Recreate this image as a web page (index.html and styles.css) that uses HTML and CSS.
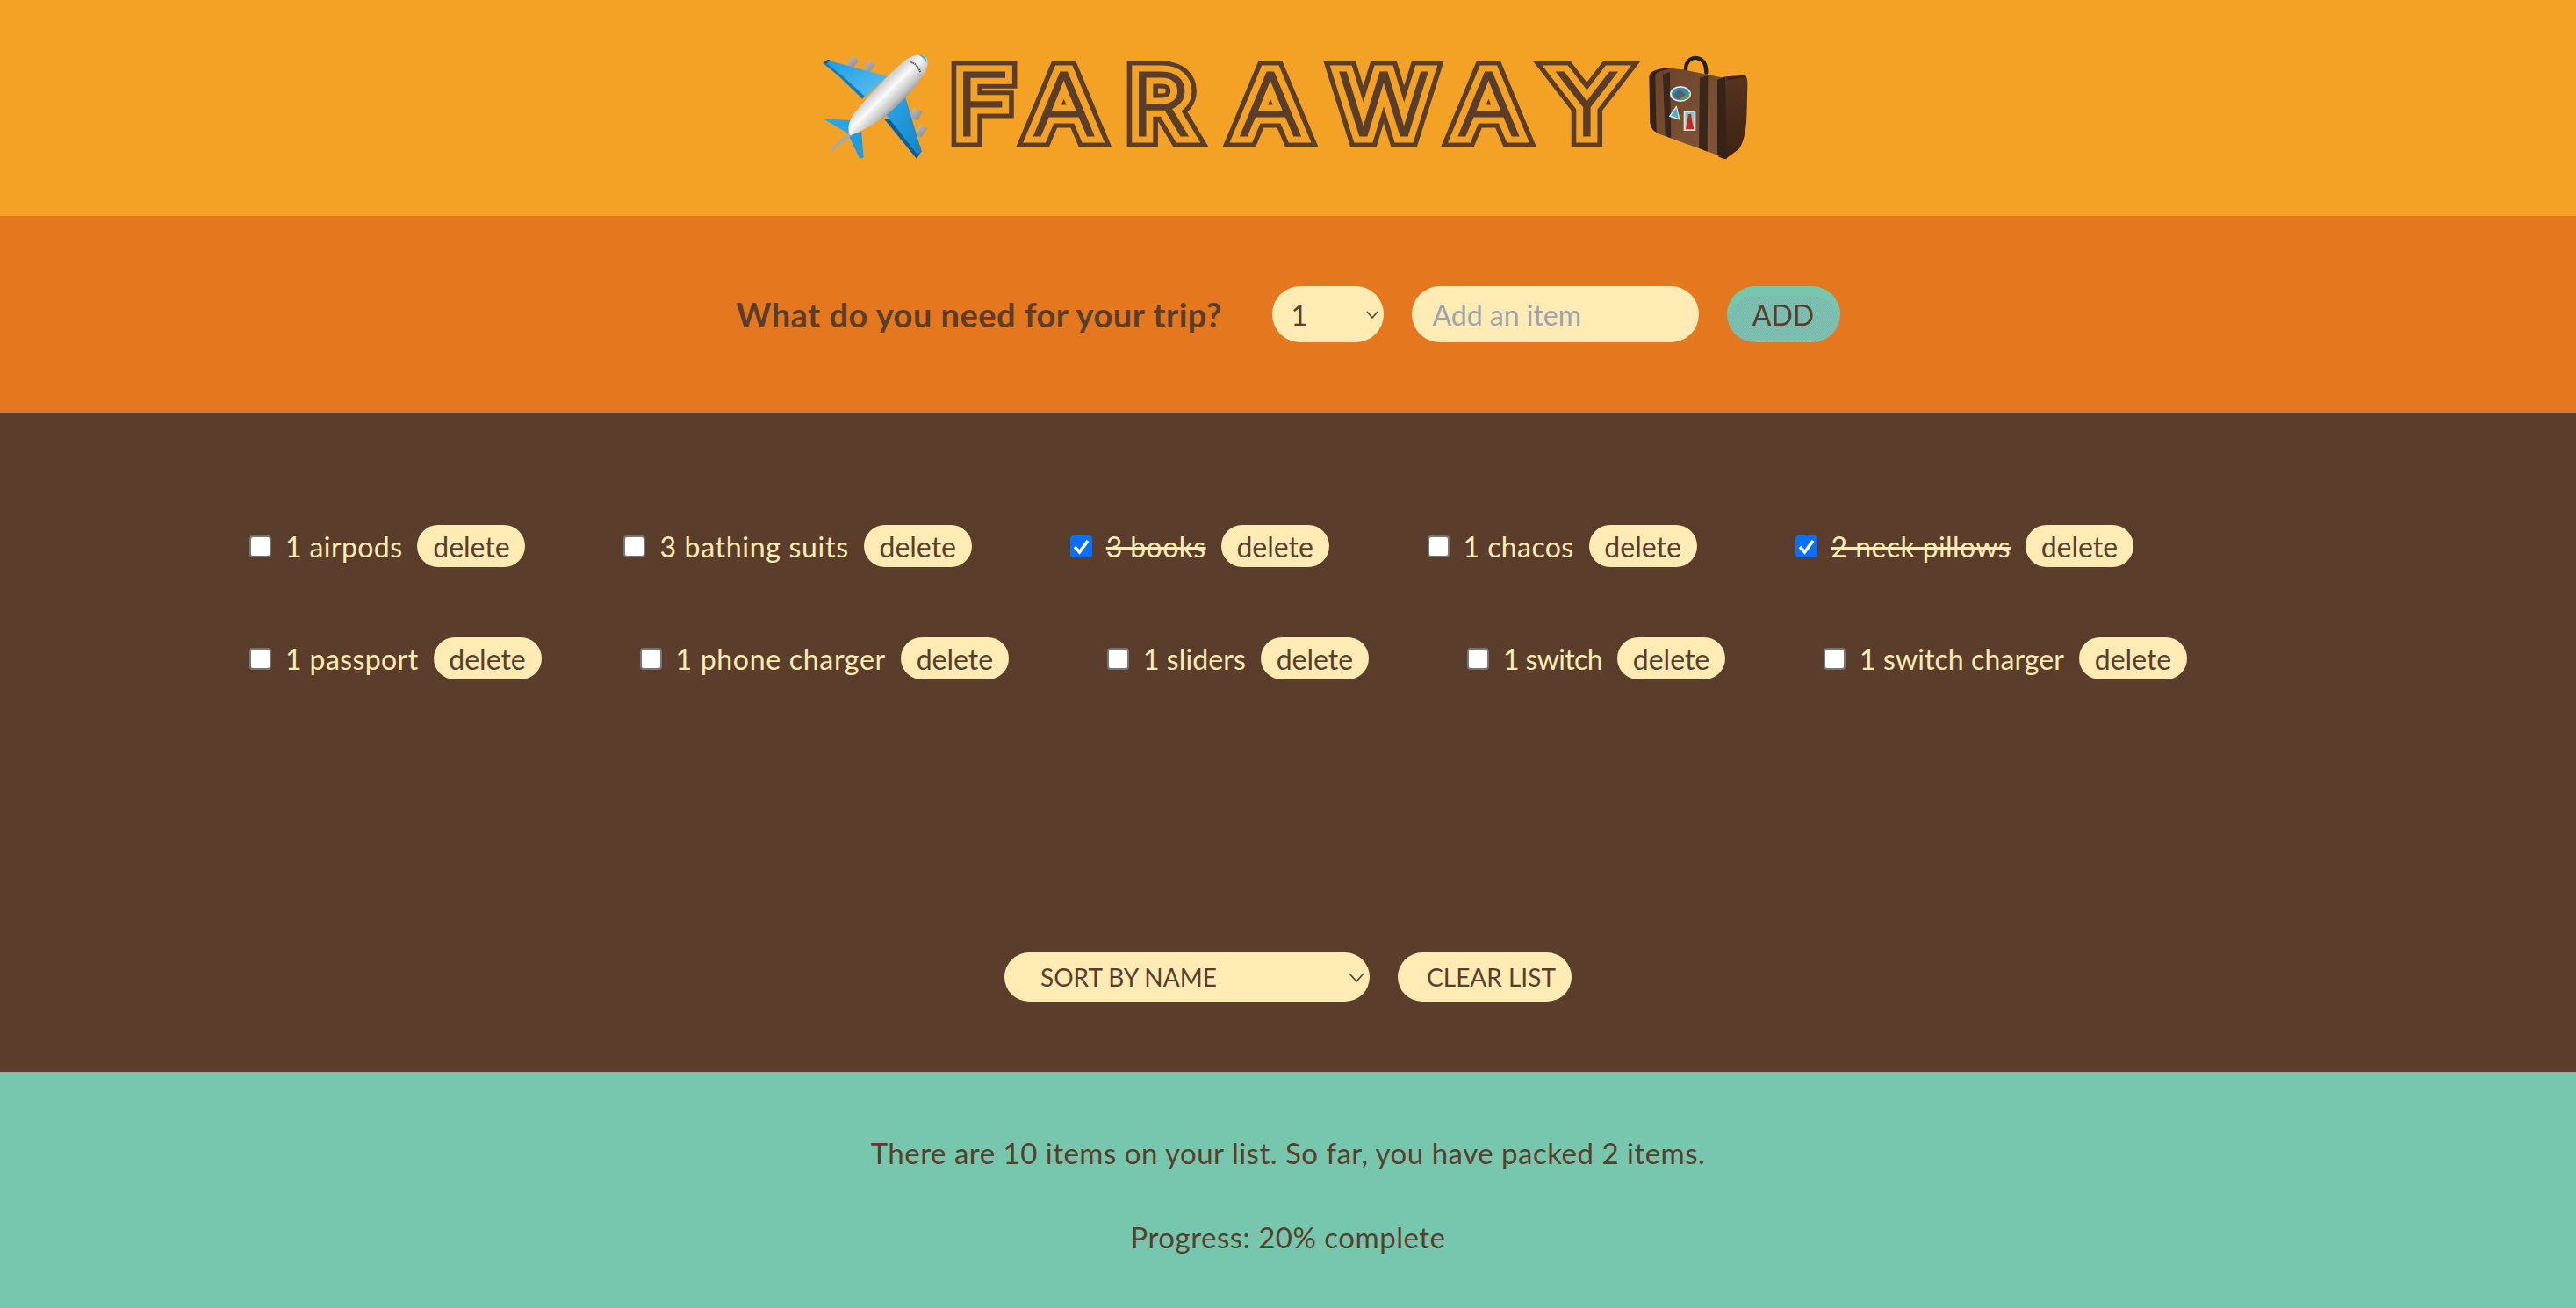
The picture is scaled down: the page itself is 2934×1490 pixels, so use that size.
FILE: index.html
```html
<!DOCTYPE html>
<html lang="en">
<head>
<meta charset="utf-8">
<title>Far Away</title>
<link rel="stylesheet" href="styles.css">
</head>
<body>
<div class="app">
  <header class="logo">
    <svg class="emoji" viewBox="24 20 360 360" aria-hidden="true">
      <defs>
        <linearGradient id="wingA" x1="0" y1="0" x2="1" y2="1"><stop offset="0" stop-color="#1f9be0"/><stop offset="1" stop-color="#5cc3f2"/></linearGradient>
        <linearGradient id="wingB" x1="0" y1="0" x2="1" y2="1"><stop offset="0" stop-color="#2aa8ea"/><stop offset="1" stop-color="#1583c8"/></linearGradient>
        <linearGradient id="hull" gradientUnits="userSpaceOnUse" x1="195" y1="105" x2="295" y2="205"><stop offset="0" stop-color="#a5a5a5"/><stop offset="0.35" stop-color="#e4e4e4"/><stop offset="0.47" stop-color="#fafafa"/><stop offset="0.75" stop-color="#c4c4c4"/><stop offset="1" stop-color="#767676"/></linearGradient>
        <linearGradient id="eng" x1="0" y1="0" x2="1" y2="1"><stop offset="0" stop-color="#c4c4c4"/><stop offset="1" stop-color="#858585"/></linearGradient>
      </defs>
      <path fill="url(#eng)" d="M105 60 125 23 148 42 130 63Z"/>
      <path fill="url(#eng)" d="M162 76 178 40 204 55 183 81Z"/>
      <path fill="url(#eng)" d="M322 240 335 203 366 214 350 245Z"/>
      <path fill="url(#eng)" d="M340 300 355 261 382 272 362 302Z"/>
      <path fill="#0f4c7c" d="M25 50 42 37 60 44 40 58Z"/>
      <path fill="#117ab8" d="M25 50 80 95 160 172 190 130 60 50Z"/>
      <path fill="url(#wingA)" d="M40 52 42 40 245 95 170 165 90 92Z"/>
      <path fill="#0f5e93" d="M232 238 345 377 362 350 330 260Z"/>
      <path fill="url(#wingB)" d="M240 225 305 160 362 352 348 362Z"/>
      <path fill="#29a5e6" d="M25 240 120 245 112 290Z"/>
      <path fill="#1f9be0" d="M113 298 156 283 164 372 151 377Z"/>
      <path fill="#a8a8a8" d="M150 252 49 345 55 353 128 292Z"/>
      <path fill="url(#hull)" d="M358 22C390 24 388 60 368 90 335 145 275 205 218 245 188 266 150 285 118 297 104 268 118 235 143 208 188 155 245 92 298 46 318 30 340 20 358 22Z"/>
      <path fill="#2ab0ee" d="M352 22C368 20 382 32 379 50 374 38 365 28 352 22Z"/>
      <path fill="none" stroke="#4c4c4c" stroke-width="6" stroke-dasharray="4 2" d="M322 46C338 48 352 62 358 82"/>
    </svg>
    <svg class="wordmark" viewBox="0 0 721.4 132" preserveAspectRatio="none" role="img" aria-label="FAR AWAY">
      <g class="ring-outer"><use href="#far"/></g>
      <g class="ring-gap"><use href="#far"/></g>
      <g class="ring-core"><text id="far" x="19 98 197.5 300 308 409 530 630" y="98">FAR AWAY</text></g>
    </svg>
    <svg class="emoji" viewBox="12 20 360 360" aria-hidden="true">
      <defs>
        <linearGradient id="leather" x1="0" y1="0" x2="1" y2="1"><stop offset="0" stop-color="#6a4429"/><stop offset="1" stop-color="#84563a"/></linearGradient>
        <linearGradient id="side" x1="0" y1="0" x2="0" y2="1"><stop offset="0" stop-color="#573420"/><stop offset="1" stop-color="#3c2213"/></linearGradient>
      </defs>
      <path fill="none" stroke="#23201f" stroke-width="13" stroke-linecap="round" d="M150 72C150 40 172 28 192 33 212 38 220 56 220 82"/>
      <path fill="url(#side)" d="M270 100 352 93C360 96 362 110 361 130L358 240C355 290 345 330 330 345L285 378 262 370Z"/>
      <path fill="url(#leather)" d="M32 88C32 78 60 72 100 68L140 72 280 100 286 374 60 292C40 285 30 270 28 250Z"/>
      <path fill="#352318" d="M25 95C25 82 45 72 72 68L100 68 60 78C50 82 45 90 46 105L50 285C38 280 30 268 28 250Z"/>
      <path fill="#3a271b" d="M72 88 96 80 100 306 80 298Z"/>
      <path fill="#3a271b" d="M198 100 226 92 224 352 195 340Z"/>
      <path fill="#352318" d="M258 106 285 96 290 378 258 362Z"/>
      <path fill="#352318" d="M285 96 352 91 358 97 296 106Z"/>
      <ellipse cx="132" cy="155" rx="36" ry="27" fill="#e4e8e6"/>
      <ellipse cx="132" cy="155" rx="30" ry="22" fill="#2f8db0"/>
      <path fill="#54606b" d="M108 160 128 136 148 158 140 172 118 172Z"/>
      <path fill="#5f9a54" d="M126 174 165 148 160 168 140 176Z"/>
      <path fill="#dfe9e8" d="M119 194 131 244 92 232Z"/>
      <path fill="#4bb1c9" d="M118 203 126 238 99 229Z"/>
      <path fill="#d8e2e0" d="M143 212 184 212 184 281 143 281Z"/>
      <path fill="#8fc4cc" d="M149 218 178 218 178 275 149 275Z"/>
      <path fill="#c1281f" d="M150 276 157 240 170 240 178 276Z"/>
      <path fill="#a8332a" d="M158 224 169 224 170 240 157 240Z"/>
    </svg>
  </header>

  <form class="add-form">
    <h3 class="prompt">What do you need for your trip?</h3>
    <select class="field qty"><option>1</option></select>
    <input class="field item-input" type="text" placeholder="Add an item">
    <button class="add-btn" type="button">ADD</button>
  </form>

  <main class="list">
    <ul class="items">
      <li class="item"><input class="check" type="checkbox"><span class="label">1 airpods</span><button class="delete" type="button">delete</button></li>
      <li class="item"><input class="check" type="checkbox"><span class="label wide">3 bathing suits</span><button class="delete" type="button">delete</button></li>
      <li class="item"><input class="check" type="checkbox" checked><span class="label packed">3 books</span><button class="delete" type="button">delete</button></li>
      <li class="item"><input class="check" type="checkbox"><span class="label">1 chacos</span><button class="delete" type="button">delete</button></li>
      <li class="item"><input class="check" type="checkbox" checked><span class="label packed">2 neck pillows</span><button class="delete" type="button">delete</button></li>
      <li class="item"><input class="check" type="checkbox"><span class="label">1 passport</span><button class="delete" type="button">delete</button></li>
      <li class="item"><input class="check" type="checkbox"><span class="label wide">1 phone charger</span><button class="delete" type="button">delete</button></li>
      <li class="item"><input class="check" type="checkbox"><span class="label snug">1 sliders</span><button class="delete" type="button">delete</button></li>
      <li class="item"><input class="check" type="checkbox"><span class="label narrow">1 switch</span><button class="delete" type="button">delete</button></li>
      <li class="item"><input class="check" type="checkbox"><span class="label snug">1 switch charger</span><button class="delete" type="button">delete</button></li>
    </ul>
    <div class="actions">
      <select class="sort"><option>SORT BY NAME</option></select>
      <button class="clear" type="button">CLEAR LIST</button>
    </div>
  </main>

  <footer class="stats">
    <p class="stat-line">There are 10 items on your list. So far, you have packed 2 items.</p>
    <p class="stat-line">Progress: 20% complete</p>
  </footer>
</div>
</body>
</html>
```

FILE: styles.css
```css
* { box-sizing: border-box; margin: 0; padding: 0; }

body {
  font-family: "Lato", "Open Sans", sans-serif;
  font-size: 32px;
  color: #5a3e2b;
}

.app {
  display: grid;
  grid-template-rows: 246px 224px 1fr 269px;
  height: 100vh;
  overflow: hidden;
}

/* header */
.logo {
  background: #f4a226;
  display: flex;
  align-items: center;
  justify-content: center;
  padding: 0 3px 3px 0;
}
.emoji { width: 120px; height: 120px; flex: none; }
.wordmark { width: 808px; height: 132px; flex: none; margin-left: 9px; }
.wordmark text {
  font-family: "Inter", "Liberation Sans", sans-serif;
  font-size: 98px;
  font-weight: 200;
}
.ring-outer, .ring-gap, .ring-core { stroke-linejoin: miter; stroke-miterlimit: 3; }
.ring-outer { fill: #5a3e2b; stroke: #5a3e2b; stroke-width: 27px; }
.ring-gap { fill: #f4a226; stroke: #f4a226; stroke-width: 17px; }
.ring-core { fill: #5a3e2b; stroke: #5a3e2b; stroke-width: 3px; }

/* add form */
.add-form {
  background: #e5771f;
  display: flex;
  align-items: center;
  justify-content: center;
  gap: 32px;
}
.prompt {
  font-size: 38px;
  font-weight: 700;
  letter-spacing: 0.5px;
  margin-right: 26px;
  width: 552px;
  white-space: nowrap;
}
.field {
  height: 64px;
  border: none;
  border-radius: 999px;
  background-color: #ffebb3;
  color: #5a3e2b;
  font: inherit;
}
.qty {
  width: 127px;
  padding-left: 22px;
  appearance: none;
  background-image: url("data:image/svg+xml,%3Csvg xmlns='http://www.w3.org/2000/svg' width='14' height='9'%3E%3Cpath d='M1 1l6 7 6-7' fill='none' stroke='%235a3e2b' stroke-width='1.6'/%3E%3C/svg%3E");
  background-repeat: no-repeat;
  background-position: right 6px center;
}
.item-input { width: 327px; padding: 0 24px; }
.item-input::placeholder { color: #9ca3af; opacity: 1; }
.add-btn {
  width: 129px;
  height: 64px;
  border: none;
  border-radius: 999px;
  color: #5a3e2b;
  font: inherit;
  background-color: #76c7ad;
  background-image: repeating-conic-gradient(#7fb5b0 0 25%, #76c7ad 0 50%);
  background-size: 2px 2px;
  box-shadow: inset 0 11px 0 #76c7ad;
}

/* list */
.list {
  background: #5a3e2b;
  color: #ffebb3;
  display: flex;
  flex-direction: column;
  justify-content: space-between;
  padding: 128px 0 80px;
}
.items {
  list-style: none;
  display: flex;
  flex-wrap: wrap;
  gap: 80px 112px;
  padding: 0 334px 0 284px;
}
.item {
  display: flex;
  align-items: center;
  height: 48px;
}
.check {
  appearance: none;
  width: 25px;
  height: 25px;
  margin-right: 16px;
  flex: none;
  border: 2px solid #767676;
  border-radius: 4px;
  background: #fff;
}
.check:checked {
  border: none;
  background-color: #0a6fff;
  background-image: url("data:image/svg+xml,%3Csvg xmlns='http://www.w3.org/2000/svg' viewBox='0 0 25 25'%3E%3Cpath d='M5 13l5.5 6L20 6' fill='none' stroke='%23fff' stroke-width='3.6'/%3E%3C/svg%3E");
}
.label { margin-right: 17px; letter-spacing: 0.4px; white-space: nowrap; }
.wide { letter-spacing: 0.7px; }
.narrow { letter-spacing: -0.6px; }
.snug { letter-spacing: 0.1px; }
.packed { text-decoration: line-through; }
.delete {
  width: 123px;
  height: 48px;
  border: none;
  border-radius: 999px;
  background: #ffebb3;
  color: #5a3e2b;
  font: inherit;
}
.actions {
  display: flex;
  justify-content: center;
  gap: 32px;
}
.sort {
  width: 416px;
  height: 56px;
  padding-left: 41px;
  border: none;
  border-radius: 999px;
  color: #5a3e2b;
  font: inherit;
  font-size: 28px;
  appearance: none;
  background-color: #ffebb3;
  background-image: url("data:image/svg+xml,%3Csvg xmlns='http://www.w3.org/2000/svg' width='18' height='11'%3E%3Cpath d='M1 1l8 9 8-9' fill='none' stroke='%235a3e2b' stroke-width='1.6'/%3E%3C/svg%3E");
  background-repeat: no-repeat;
  background-position: right 6px center;
}
.clear {
  width: 198px;
  height: 56px;
  padding: 0 18px 0 33px;
  border: none;
  border-radius: 999px;
  background: #ffebb3;
  color: #5a3e2b;
  font: inherit;
  font-size: 28px;
  white-space: nowrap;
}

/* stats */
.stats {
  background: #76c7ad;
  display: flex;
  flex-direction: column;
  align-items: center;
  gap: 56px;
  padding-top: 72px;
  font-size: 33px;
  letter-spacing: 0.5px;
}
.stat-line { line-height: 40px; }
```
